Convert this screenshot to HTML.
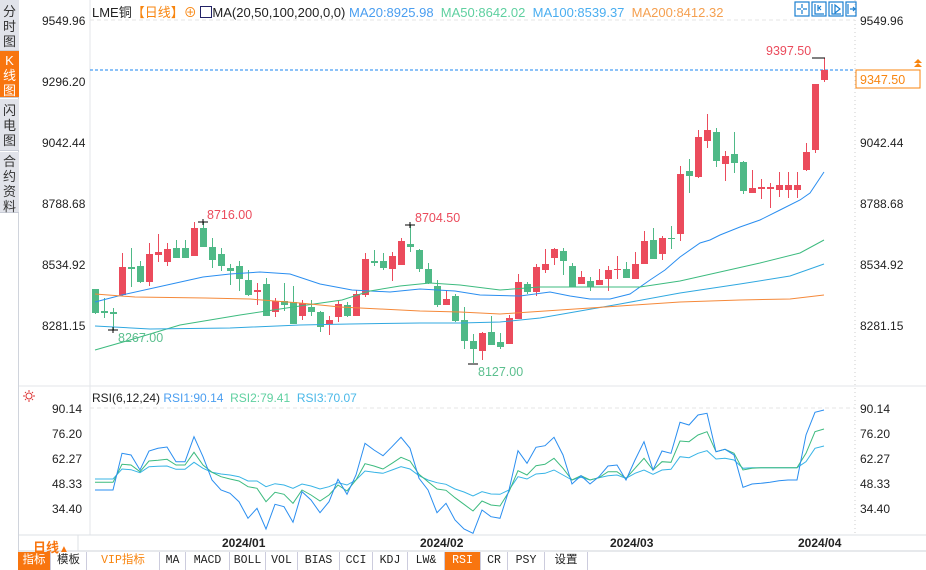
<!DOCTYPE html>
<html><head><meta charset="utf-8"><style>
*{margin:0;padding:0;box-sizing:border-box}
body{width:926px;height:570px;overflow:hidden;background:#fff;font-family:"Liberation Sans","Noto Sans CJK SC",sans-serif;position:relative}
.side{position:absolute;left:0;top:0;width:19px;height:552px;background:#fff;border-right:1px solid #d0d4dc}
.tab{position:absolute;left:0;width:19px;background:#e1e3ea;color:#333;font-size:13px;line-height:15px;text-align:center;border-bottom:1px solid #c8ccd6}
.lab{position:absolute;font-size:12px;color:#222}
.bt{position:absolute;top:552px;height:18px;font-family:"Liberation Mono","Noto Sans CJK SC",monospace;font-size:11.5px;line-height:18px;text-align:center;border-right:1px solid #ccd;color:#222}
</style></head><body>
<div class="side">
<div class="tab" style="top:0;height:51px;padding-top:4px">分<br>时<br>图</div>
<div class="tab" style="top:51px;height:47px;background:#f8750f;color:#fff;padding-top:2px">K<br>线<br>图</div>
<div class="tab" style="top:99px;height:52px;padding-top:4px">闪<br>电<br>图</div>
<div class="tab" style="top:152px;height:61px;padding-top:2px">合<br>约<br>资<br>料</div>
</div>
<svg id="c" width="926" height="570" style="position:absolute;left:0;top:0" xmlns="http://www.w3.org/2000/svg">
<line x1="90" y1="0" x2="90" y2="535" stroke="#e3e6ea"/>
<line x1="855" y1="0" x2="855" y2="535" stroke="#ccc" stroke-dasharray="1,3"/>
<line x1="90" y1="20" x2="855" y2="20" stroke="#e6e6e6" stroke-dasharray="4,3"/>
<line x1="90" y1="408" x2="855" y2="408" stroke="#e6e6e6" stroke-dasharray="4,3"/>
<line x1="19" y1="386" x2="926" y2="386" stroke="#e3e6ea"/>
<line x1="19" y1="535" x2="926" y2="535" stroke="#dde0e5"/>
<line x1="19" y1="551" x2="926" y2="551" stroke="#cfd3da"/>
<line x1="78" y1="535" x2="78" y2="551" stroke="#dde0e5"/>
<line x1="90" y1="70" x2="855" y2="70" stroke="#1a86f0" stroke-dasharray="3,2"/>
<g id="g"></g>
<line x1="812" y1="58" x2="825" y2="58" stroke="#000"/>
<line x1="108" y1="330" x2="118" y2="330" stroke="#000"/><line x1="113" y1="327" x2="113" y2="333" stroke="#000"/>
<line x1="198" y1="222" x2="208" y2="222" stroke="#000"/><line x1="203" y1="219" x2="203" y2="225" stroke="#000"/>
<line x1="405" y1="225" x2="415" y2="225" stroke="#000"/><line x1="410" y1="222" x2="410" y2="228" stroke="#000"/>
<line x1="468" y1="364" x2="478" y2="364" stroke="#000"/>
<text x="207" y="219" fill="#eb4b5c" font-size="12.5">8716.00</text>
<text x="415" y="222" fill="#eb4b5c" font-size="12.5">8704.50</text>
<text x="118" y="342" fill="#5bbf8e" font-size="12.5">8267.00</text>
<text x="478" y="376" fill="#5bbf8e" font-size="12.5">8127.00</text>
<text x="766" y="55" fill="#eb4b5c" font-size="12.5">9397.50</text>
<rect x="856" y="70" width="64" height="18" fill="#fff" stroke="#f8850f"/>
<text x="860" y="84" fill="#f8850f" font-size="12.5">9347.50</text>
<path d="M914 63l4-4 4 4zM914 67l4-4 4 4z" fill="#f8850f"/>
<g fill="none" stroke="#1a7fd0" stroke-width="1.2">
<rect x="795" y="2" width="14" height="14"/><rect x="812" y="2" width="14" height="14"/><rect x="829" y="2" width="14" height="14"/><rect x="846" y="2" width="10" height="14"/>
<path d="M802 4v4M802 10v4M797 9h4M803 9h4"/><path d="M815 4v10h9M818 5v6M821 6l-2 2 2 2"/><path d="M832 4v10h9M835 5l5 4-5 4z"/><path d="M848 4v10M850 9h5M853 7l2 2-2 2"/>
</g>
<circle cx="29" cy="396" r="3" fill="none" stroke="#d33"/><path d="M29 390v2M29 400v2M23 396h2M33 396h2M25 392l1 1M33 392l-1 1M25 400l1-1M33 400l-1-1" stroke="#d33"/>
</svg>
<div class="lab" style="left:42px;top:14px">9549.96</div>
<div class="lab" style="left:42px;top:75px">9296.20</div>
<div class="lab" style="left:42px;top:136px">9042.44</div>
<div class="lab" style="left:42px;top:197px">8788.68</div>
<div class="lab" style="left:42px;top:258px">8534.92</div>
<div class="lab" style="left:42px;top:319px">8281.15</div>
<div class="lab" style="left:860px;top:14px">9549.96</div>
<div class="lab" style="left:860px;top:136px">9042.44</div>
<div class="lab" style="left:860px;top:197px">8788.68</div>
<div class="lab" style="left:860px;top:258px">8534.92</div>
<div class="lab" style="left:860px;top:319px">8281.15</div>
<div class="lab" style="left:52px;top:402px">90.14</div>
<div class="lab" style="left:52px;top:427px">76.20</div>
<div class="lab" style="left:52px;top:452px">62.27</div>
<div class="lab" style="left:52px;top:477px">48.33</div>
<div class="lab" style="left:52px;top:502px">34.40</div>
<div class="lab" style="left:860px;top:402px">90.14</div>
<div class="lab" style="left:860px;top:427px">76.20</div>
<div class="lab" style="left:860px;top:452px">62.27</div>
<div class="lab" style="left:860px;top:477px">48.33</div>
<div class="lab" style="left:860px;top:502px">34.40</div>
<div class="lab" style="left:92px;top:2px;font-size:13px;white-space:nowrap">LME铜<span style="color:#f8850f">【日线】</span><span style="color:#f8850f">⊕</span> <span style="display:inline-block;width:12px;height:12px;border:1px solid #226;vertical-align:-1px;background:#fff"></span>MA(20,50,100,200,0,0) <span style="color:#4a9ef0">MA20:8925.98</span> &nbsp;<span style="color:#5fd0a0">MA50:8642.02</span> &nbsp;<span style="color:#4aaef0">MA100:8539.37</span> &nbsp;<span style="color:#f5a050">MA200:8412.32</span></div>
<div class="lab" style="left:92px;top:391px;white-space:nowrap">RSI(6,12,24) <span style="color:#4a9ef0">RSI1:90.14</span> &nbsp;<span style="color:#5fd0a0">RSI2:79.41</span> &nbsp;<span style="color:#4ab8e8">RSI3:70.07</span></div>
<div class="lab" style="left:222px;top:536px;font-weight:bold">2024/01</div>
<div class="lab" style="left:420px;top:536px;font-weight:bold">2024/02</div>
<div class="lab" style="left:610px;top:536px;font-weight:bold">2024/03</div>
<div class="lab" style="left:798px;top:536px;font-weight:bold">2024/04</div>
<div class="lab" style="left:33px;top:537px;color:#f8750f;font-weight:bold;font-size:13px">日线<span style="font-size:10px">▲</span></div>
<div class="bt" style="left:18px;width:33px;background:#f8750f;color:#fff">指标</div>
<div class="bt" style="left:51px;width:36px">模板</div>
<div class="bt" style="left:87px;width:73px;color:#f8850f">VIP指标</div>
<div class="bt" style="left:160px;width:26px">MA</div>
<div class="bt" style="left:186px;width:44px">MACD</div>
<div class="bt" style="left:230px;width:36px">BOLL</div>
<div class="bt" style="left:266px;width:32px">VOL</div>
<div class="bt" style="left:298px;width:42px">BIAS</div>
<div class="bt" style="left:340px;width:33px">CCI</div>
<div class="bt" style="left:373px;width:35px">KDJ</div>
<div class="bt" style="left:408px;width:37px">LW&amp;</div>
<div class="bt" style="left:445px;width:36px;background:#f8750f;color:#fff">RSI</div>
<div class="bt" style="left:481px;width:27px">CR</div>
<div class="bt" style="left:508px;width:37px">PSY</div>
<div class="bt" style="left:545px;width:43px">设置</div>
<script>
var C=[[289,313,289,314,0],[311,313,298,318,0],[312,314,308,330,0],[267,295,253,296,1],[267,269,248,287,0],[266,282,261,283,0],[254,282,243,286,1],[252,255,234,262,1],[249,262,243,266,1],[248,258,240,258,0],[248,258,240,258,0],[228,256,222,256,1],[228,247,222,247,0],[247,260,238,268,0],[254,266,248,271,0],[268,271,264,285,0],[266,279,261,291,0],[280,295,270,296,0],[290,292,283,305,1],[284,316,278,316,0],[301,312,298,317,1],[301,305,283,311,0],[302,324,286,324,0],[303,316,300,320,1],[307,312,300,316,0],[312,327,311,332,0],[320,324,316,335,1],[304,317,300,322,1],[305,316,302,317,0],[294,316,290,316,1],[259,295,253,297,1],[261,263,250,266,0],[261,268,253,270,0],[256,269,252,281,1],[241,265,238,265,1],[244,247,225,252,0],[250,269,249,272,0],[269,283,263,284,0],[286,305,280,307,0],[299,305,291,305,1],[296,321,294,322,0],[320,341,307,349,0],[341,349,334,363,0],[333,351,332,360,1],[332,345,316,345,0],[342,347,333,349,0],[318,344,315,344,1],[282,319,274,319,1],[284,292,282,294,0],[267,292,264,296,1],[264,270,249,273,1],[249,258,248,265,1],[251,261,248,275,0],[266,287,263,287,0],[277,284,271,284,1],[281,287,277,291,0],[280,285,269,285,1],[270,279,266,291,1],[269,270,256,279,1],[269,278,262,278,0],[264,279,252,279,1],[241,264,231,264,1],[240,259,228,259,0],[238,254,236,260,1],[238,239,226,249,0],[174,234,166,241,1],[171,176,159,193,0],[137,177,130,178,1],[130,141,114,148,1],[132,161,128,167,0],[156,164,151,181,1],[154,163,132,173,0],[162,191,161,194,0],[188,193,170,193,1],[187,189,179,199,1],[187,189,183,208,1],[185,190,172,197,1],[185,190,172,198,1],[185,190,172,198,1],[152,170,143,171,1],[84,150,84,153,1],[70,80,58,82,1]];
var s='';C.forEach(function(c,i){var x=95+9*i,col=c[4]?'#eb4b5c':'#4fb987';s+='<line x1="'+(x+.5)+'" y1="'+c[2]+'" x2="'+(x+.5)+'" y2="'+c[3]+'" stroke="'+col+'"/>';s+='<rect x="'+(x-3)+'" y="'+c[0]+'" width="7" height="'+Math.max(1,c[1]-c[0])+'" fill="'+col+'"/>';});
function pl(p,col){return '<polyline fill="none" stroke="'+col+'" stroke-width="1" points="'+p+'"/>';}
s+=pl('95,302 122,295 176,283 203,277 230,274 260,272 290,274 320,284 352,290 390,292 420,289 455,291 480,295 520,296 550,292 570,296 590,299 610,299 630,294 650,280 665,270 680,257 700,243 710,240 720,235 740,227 760,220 780,210 800,200 810,193 824,172','#2a8ef0');
s+=pl('95,350 130,340 180,325 240,315 300,306 342,300 370,291 400,286 430,283 460,285 500,290 540,287 600,287 640,287 680,281 720,272 760,263 800,253 824,240','#3dbb7f');
s+=pl('95,326 150,329 230,328 300,325 350,324 420,323 460,323 500,322 540,318 580,311 620,304 680,293 740,284 790,276 824,264','#30a8e0');
s+=pl('95,294 135,297 205,298 250,299 300,303 340,307 380,309 420,311 460,312 500,314 560,310 620,306 680,302 740,300 790,299 824,295','#f5893a');
var R1=[315,315,315,205,210,255,198,190,186,230,230,155,215,285,315,325,350,400,370,432,358,365,412,320,345,383,350,283,328,270,175,195,212,185,157,190,280,315,383,355,405,432,445,375,395,400,315,197,235,187,182,157,210,297,272,297,275,243,240,285,225,170,255,198,205,112,120,90,85,200,193,210,307,297,295,292,287,285,285,150,82,75];
var R2=[292,292,292,238,240,260,228,226,223,240,240,202,240,262,275,282,288,305,310,350,322,328,355,315,330,348,330,300,318,285,236,243,252,235,217,228,268,290,312,316,338,358,378,348,360,363,320,257,270,242,238,220,250,285,272,285,278,260,260,280,250,220,255,230,232,168,170,150,140,200,193,205,255,250,248,248,248,248,248,205,140,132];
var R3=[282,282,282,252,254,263,245,244,243,253,253,232,250,262,267,270,275,288,288,305,296,300,310,297,303,312,305,293,300,285,258,262,265,255,245,252,272,285,293,298,312,321,333,320,327,328,315,275,282,267,265,255,270,285,277,285,278,272,270,280,265,255,268,255,253,215,218,205,197,222,220,225,250,248,248,248,248,248,248,230,190,183];
function rp(a){return a.map(function(v,i){return (95+9*i)+','+(385+v/3).toFixed(1)}).join(' ');}
s+=pl(rp(R3),'#38b4e6')+pl(rp(R2),'#3dbb7f')+pl(rp(R1),'#2a8ef0');
document.getElementById('g').innerHTML=s;
</script>
</body></html>
